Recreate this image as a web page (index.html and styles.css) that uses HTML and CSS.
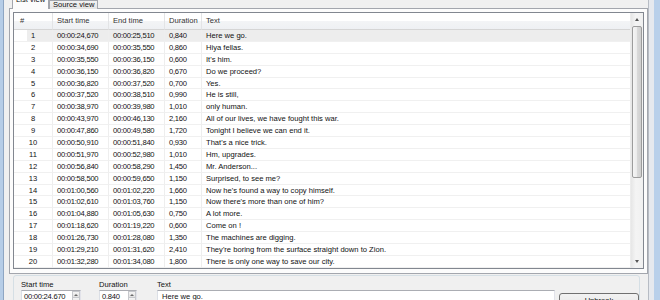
FILE: index.html
```html
<!DOCTYPE html>
<html>
<head>
    <meta charset="utf-8">
    <title>Subtitle Editor - List view</title>
    <link rel="stylesheet" href="styles.css">
</head>
<body>
    <div class="frame frame-left"></div>

    <div class="window">
        <div class="tabs">
            <div class="tab active">List view</div>
            <div class="tab">Source view</div>
        </div>

        <div class="pane">
            <div class="table">
                <div class="list">
                    <div class="row head">
                        <div class="cell">#</div>
                        <div class="cell">Start time</div>
                        <div class="cell">End time</div>
                        <div class="cell">Duration</div>
                        <div class="cell">Text</div>
                    </div>
                    <div class="row current"><div class="cell num">1</div><div class="cell time">00:00:24,670</div><div class="cell time">00:00:25,510</div><div class="cell time">0,840</div><div class="cell">Here we go.</div></div>
                    <div class="row"><div class="cell num">2</div><div class="cell time">00:00:34,690</div><div class="cell time">00:00:35,550</div><div class="cell time">0,860</div><div class="cell">Hiya fellas.</div></div>
                    <div class="row"><div class="cell num">3</div><div class="cell time">00:00:35,550</div><div class="cell time">00:00:36,150</div><div class="cell time">0,600</div><div class="cell">It's him.</div></div>
                    <div class="row"><div class="cell num">4</div><div class="cell time">00:00:36,150</div><div class="cell time">00:00:36,820</div><div class="cell time">0,670</div><div class="cell">Do we proceed?</div></div>
                    <div class="row"><div class="cell num">5</div><div class="cell time">00:00:36,820</div><div class="cell time">00:00:37,520</div><div class="cell time">0,700</div><div class="cell">Yes.</div></div>
                    <div class="row"><div class="cell num">6</div><div class="cell time">00:00:37,520</div><div class="cell time">00:00:38,510</div><div class="cell time">0,990</div><div class="cell">He is still,</div></div>
                    <div class="row"><div class="cell num">7</div><div class="cell time">00:00:38,970</div><div class="cell time">00:00:39,980</div><div class="cell time">1,010</div><div class="cell">only human.</div></div>
                    <div class="row"><div class="cell num">8</div><div class="cell time">00:00:43,970</div><div class="cell time">00:00:46,130</div><div class="cell time">2,160</div><div class="cell">All of our lives, we have fought this war.</div></div>
                    <div class="row"><div class="cell num">9</div><div class="cell time">00:00:47,860</div><div class="cell time">00:00:49,580</div><div class="cell time">1,720</div><div class="cell">Tonight I believe we can end it.</div></div>
                    <div class="row"><div class="cell num">10</div><div class="cell time">00:00:50,910</div><div class="cell time">00:00:51,840</div><div class="cell time">0,930</div><div class="cell">That's a nice trick.</div></div>
                    <div class="row"><div class="cell num">11</div><div class="cell time">00:00:51,970</div><div class="cell time">00:00:52,980</div><div class="cell time">1,010</div><div class="cell">Hm, upgrades.</div></div>
                    <div class="row"><div class="cell num">12</div><div class="cell time">00:00:56,840</div><div class="cell time">00:00:58,290</div><div class="cell time">1,450</div><div class="cell">Mr. Anderson...</div></div>
                    <div class="row"><div class="cell num">13</div><div class="cell time">00:00:58,500</div><div class="cell time">00:00:59,650</div><div class="cell time">1,150</div><div class="cell">Surprised, to see me?</div></div>
                    <div class="row"><div class="cell num">14</div><div class="cell time">00:01:00,560</div><div class="cell time">00:01:02,220</div><div class="cell time">1,660</div><div class="cell">Now he's found a way to copy himself.</div></div>
                    <div class="row"><div class="cell num">15</div><div class="cell time">00:01:02,610</div><div class="cell time">00:01:03,760</div><div class="cell time">1,150</div><div class="cell">Now there's more than one of him?</div></div>
                    <div class="row"><div class="cell num">16</div><div class="cell time">00:01:04,880</div><div class="cell time">00:01:05,630</div><div class="cell time">0,750</div><div class="cell">A lot more.</div></div>
                    <div class="row"><div class="cell num">17</div><div class="cell time">00:01:18,620</div><div class="cell time">00:01:19,220</div><div class="cell time">0,600</div><div class="cell">Come on !</div></div>
                    <div class="row"><div class="cell num">18</div><div class="cell time">00:01:26,730</div><div class="cell time">00:01:28,080</div><div class="cell time">1,350</div><div class="cell">The machines are digging.</div></div>
                    <div class="row"><div class="cell num">19</div><div class="cell time">00:01:29,210</div><div class="cell time">00:01:31,620</div><div class="cell time">2,410</div><div class="cell">They're boring from the surface straight down to Zion.</div></div>
                    <div class="row"><div class="cell num">20</div><div class="cell time">00:01:32,280</div><div class="cell time">00:01:34,080</div><div class="cell time">1,800</div><div class="cell">There is only one way to save our city.</div></div>
                </div>

                <div class="scrollbar">
                    <div class="sb-btn"><span class="arrow up"></span></div>
                    <div class="sb-track"><div class="sb-thumb"></div></div>
                    <div class="sb-btn"><span class="arrow down"></span></div>
                </div>
            </div>
        </div>

        <div class="editor">
            <div class="field field-start">
                <div class="label">Start time</div>
                <div class="spinbox">
                    <span class="value">00:00:24.670</span>
                    <span class="spin"><span class="spin-btn"><span class="arrow up"></span></span><span class="spin-btn"><span class="arrow down"></span></span></span>
                </div>
            </div>
            <div class="field field-dur">
                <div class="label">Duration</div>
                <div class="spinbox">
                    <span class="value">0.840</span>
                    <span class="spin"><span class="spin-btn"><span class="arrow up"></span></span><span class="spin-btn"><span class="arrow down"></span></span></span>
                </div>
            </div>
            <div class="field field-text">
                <div class="label">Text</div>
                <div class="textbox">Here we go.</div>
            </div>
            <div class="button">Unbreak</div>
        </div>
    </div>

    <div class="frame frame-right"></div>
</body>
</html>
```

FILE: styles.css
```css
body {
    margin: 0;
    width: 660px;
    height: 300px;
    overflow: hidden;
    display: flex;
    background-color: #f0f0f0;
    font-family: "Liberation Sans", Arial, sans-serif;
    font-size: 7.6px;
    color: #111;
}

.frame-left {
    width: 3px;
    background-color: #b6cde7;
    border-right: 1px solid #8ea6c3;
}

.frame-right {
    width: 11px;
    background: linear-gradient(90deg, #e6e9ee 0 5px, #b9d0ea 5px);
    border-left: 1px solid #b7bcc4;
}

.window {
    flex: 1;
    padding-left: 5px;
}

/* tabs */

.tabs {
    height: 8px;
    display: flex;
    align-items: flex-end;
    padding-left: 3px;
    border-bottom: 1px solid #a3a6ad;
}

.tab {
    box-sizing: border-box;
    height: 9px;
    margin-bottom: -1px;
    padding: 0 3px;
    line-height: 7px;
    border: 1px solid #a3a6ad;
    border-bottom: none;
    background: linear-gradient(#f2f2f2, #e3e3e3);
    white-space: nowrap;
}

.tab.active {
    height: 14px;
    width: 37px;
    line-height: 8px;
    background-color: #fcfcfc;
    background-image: none;
}

/* pane + list */

.pane {
    border: 1px solid #a3a6ad;
    border-top: none;
    background-color: #fcfcfc;
    padding: 3px 3px 4px 3px;
}

.table {
    display: flex;
    border: 1px solid #828790;
    background-color: #fff;
}

.list {
    flex: 1;
}

.row {
    display: grid;
    grid-template-columns: 39px 56px 56px 37px 1fr;
    height: 11.9px;
}

.cell {
    box-sizing: border-box;
    padding-left: 4px;
    line-height: 11px;
    white-space: nowrap;
    overflow: hidden;
    border-right: 1px solid #eeeeee;
    border-bottom: 1px solid #f0f0f0;
}

.cell:last-child {
    border-right: none;
}

.cell.num {
    padding-left: 0;
    text-align: center;
}

.cell.time {
    letter-spacing: -0.25px;
}

.row.head {
    height: 17px;
    background: linear-gradient(#ffffff 0, #ffffff 45%, #f3f4f6 46%, #eef0f3 100%);
    color: #333;
}

.row.head .cell {
    line-height: 16px;
    border-right-color: #e3e4e6;
    border-bottom-color: #d5d5d5;
}

.row.head .cell:first-child {
    padding-left: 6px;
}

.row.current {
    background-color: #ededed;
}

.row.current .cell:first-child {
    background: linear-gradient(90deg, #ffffff 0 13px, transparent 13px);
}

/* scrollbar */

.scrollbar {
    width: 12px;
    display: flex;
    flex-direction: column;
    background: linear-gradient(90deg, #e6e6e6, #f4f4f4 40%, #f0f0f0);
    border-left: 1px solid #ececec;
}

.sb-btn {
    height: 12px;
    display: flex;
    align-items: center;
    justify-content: center;
}

.sb-track {
    flex: 1;
    padding-top: 1px;
}

.sb-thumb {
    box-sizing: border-box;
    height: 152px;
    margin: 0 1px;
    border: 1px solid #9c9c9c;
    border-radius: 2px;
    background: linear-gradient(90deg, #f5f5f5, #ececec 45%, #d9d9d9 55%, #cfcfcf);
}

.arrow {
    width: 0;
    height: 0;
    border-left: 2.5px solid transparent;
    border-right: 2.5px solid transparent;
}

.arrow.up {
    border-bottom: 3px solid #555;
}

.arrow.down {
    border-top: 3px solid #555;
}

/* editor panel */

.editor {
    display: flex;
    margin: 1px 8px 0 4px;
    padding: 4px 0 0 7px;
    height: 40px;
    border: 1px solid #d5dfe5;
    border-radius: 3px;
}

.label {
    height: 10px;
    line-height: 9px;
}

.field-start {
    width: 60px;
    margin-right: 18px;
}

.field-dur {
    width: 38px;
    margin-right: 20px;
}

.field-text {
    flex: 1;
    margin-right: 4px;
}

.spinbox,
.textbox {
    box-sizing: border-box;
    height: 15px;
    display: flex;
    background-color: #fff;
    border: 1px solid #abadb3;
    border-color: #abadb3 #e2e3ea #e3e9ef #dbdfe6;
    line-height: 9px;
}

.spinbox .value {
    flex: 1;
    padding: 1px 0 0 2px;
    letter-spacing: -0.25px;
}

.spin {
    width: 8px;
    display: flex;
    flex-direction: column;
}

.spin-btn {
    height: 6px;
    display: flex;
    align-items: center;
    justify-content: center;
    background: linear-gradient(#f4f4f4, #e2e2e2);
    border: 1px solid #c6c8cc;
    border-bottom: none;
}

.spin .arrow {
    border-left-width: 2px;
    border-right-width: 2px;
}

.spin .arrow.up {
    border-bottom: 2px solid #6a6a6a;
}

.spin .arrow.down {
    border-top: 2px solid #6a6a6a;
}

.textbox {
    padding: 1px 0 0 4px;
}

.button {
    box-sizing: border-box;
    width: 80px;
    height: 20px;
    margin-top: 13px;
    padding-top: 2px;
    line-height: 9px;
    text-align: center;
    border: 1px solid #707070;
    border-radius: 3px;
    background: linear-gradient(#f2f2f2, #ebebeb 45%, #dddddd 50%, #cfcfcf);
}
```
